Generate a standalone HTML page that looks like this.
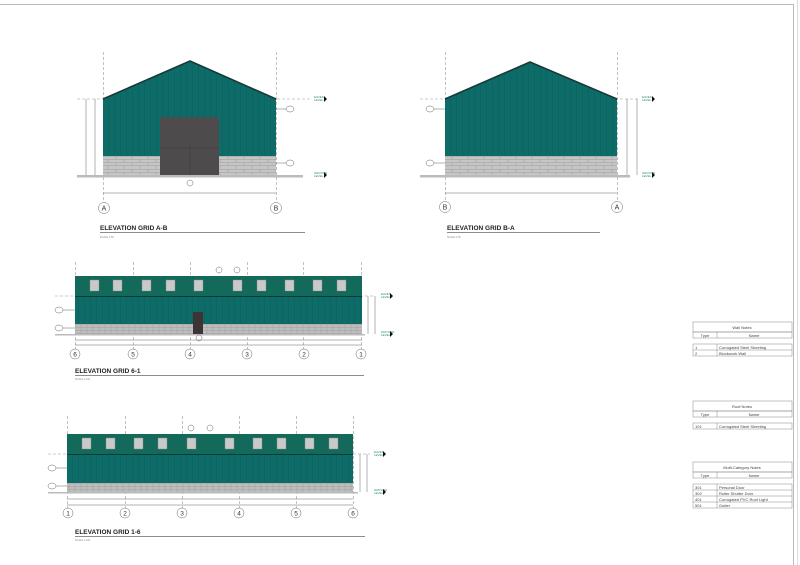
<!DOCTYPE html>
<html><head><meta charset="utf-8"><style>
html,body{margin:0;padding:0;background:#fff;}
svg{display:block;font-family:"Liberation Sans",sans-serif;}
</style></head><body>
<svg width="800" height="565" viewBox="0 0 800 565" xmlns="http://www.w3.org/2000/svg">
<defs>
<pattern id="clad" width="6" height="10" patternUnits="userSpaceOnUse"><rect width="6" height="10" fill="#0d6b68"/><line x1="0.5" y1="0" x2="0.5" y2="10" stroke="#0a5f5c" stroke-width="0.5"/></pattern>
<pattern id="block" width="16" height="6.5" patternUnits="userSpaceOnUse"><rect width="16" height="6.5" fill="#c6c6c6"/><path d="M0 0.3H16M0 3.3H16M4 0V3.3M12 3.3V6.5" stroke="#9a9a9a" stroke-width="0.5" fill="none"/></pattern>
<pattern id="blk2" width="6" height="3" patternUnits="userSpaceOnUse"><rect width="6" height="3" fill="#bdbdbd"/><path d="M0 0.3H6M3 0V3" stroke="#999" stroke-width="0.4"/></pattern>
</defs>
<!-- page border -->
<path d="M0 4.5H793.5V565" stroke="#bbb" fill="none" stroke-width="1"/>
<line x1="797.5" y1="0" x2="797.5" y2="565" stroke="#ddd"/>

<g stroke="#999" stroke-width="0.6" stroke-dasharray="3,2" fill="none">
<!-- A-B -->
<line x1="103.5" y1="52" x2="103.5" y2="202"/><line x1="276.5" y1="52" x2="276.5" y2="202"/>
<line x1="77" y1="99" x2="310" y2="99"/>
<!-- B-A -->
<line x1="445.5" y1="52" x2="445.5" y2="202"/><line x1="617.5" y1="52" x2="617.5" y2="202"/>
<line x1="420" y1="99" x2="640" y2="99"/>
<!-- 6-1 -->
<line x1="75.5" y1="262" x2="75.5" y2="349"/><line x1="133.5" y1="262" x2="133.5" y2="349"/><line x1="190.5" y1="262" x2="190.5" y2="349"/><line x1="247.5" y1="262" x2="247.5" y2="349"/><line x1="303.5" y1="262" x2="303.5" y2="349"/><line x1="361.5" y1="262" x2="361.5" y2="349"/>
<line x1="55" y1="296" x2="375" y2="296"/>
<!-- 1-6 -->
<line x1="67.5" y1="416" x2="67.5" y2="508"/><line x1="125.5" y1="416" x2="125.5" y2="508"/><line x1="182.5" y1="416" x2="182.5" y2="508"/><line x1="239.5" y1="416" x2="239.5" y2="508"/><line x1="296.5" y1="416" x2="296.5" y2="508"/><line x1="353.5" y1="416" x2="353.5" y2="508"/>
<line x1="48" y1="454" x2="370" y2="454"/>
</g>

<!-- ===== Elevation A-B ===== -->
<polygon points="103,99 190,61 276,99 276,156 103,156" fill="url(#clad)"/>
<path d="M103 99L190 61L276 99" stroke="#173a38" stroke-width="1.6" fill="none"/>
<rect x="103" y="156" width="173" height="19" fill="url(#block)"/>
<rect x="160" y="117" width="59" height="58" fill="#4d4b4c"/>
<path d="M160 148H219M190 145V175" stroke="#333" stroke-width="0.4"/>
<rect x="77" y="175" width="226" height="2.5" fill="#bbb"/>
<g stroke="#666" stroke-width="0.5" fill="none">
<line x1="103" y1="193" x2="276" y2="193"/>
<line x1="86" y1="99" x2="86" y2="175"/><line x1="95" y1="99" x2="95" y2="175"/>
<circle cx="104" cy="208" r="5.5"/><circle cx="276" cy="208" r="5.5"/>
<circle cx="190" cy="183" r="3"/><ellipse cx="290" cy="109" rx="4" ry="3"/><ellipse cx="290" cy="163" rx="4" ry="3"/>
<line x1="276" y1="109" x2="286" y2="109"/><line x1="276" y1="163" x2="286" y2="163"/>
</g>
<g font-size="7" text-anchor="middle" fill="#333"><text x="104" y="210.5">A</text><text x="276" y="210.5">B</text></g>
<text x="100" y="230" font-size="6.5" font-weight="bold" fill="#222">ELEVATION GRID A-B</text>
<line x1="100" y1="232.5" x2="305" y2="232.5" stroke="#666" stroke-width="0.7"/>
<text x="100" y="238" font-size="2.5" fill="#888">SCALE 1:50</text>
<g font-size="3" fill="#2a8a6a"><text x="314" y="98">EAVES</text><text x="314" y="101">LEVEL</text><text x="314" y="174">GROUND</text><text x="314" y="177">LEVEL</text></g>
<path d="M324 96l3 3-3 3zM324 172l3 3-3 3z" fill="#111"/>

<!-- ===== Elevation B-A ===== -->
<polygon points="445,99 530,62 617,99 617,156 445,156" fill="url(#clad)"/>
<path d="M445 99L530 62L617 99" stroke="#173a38" stroke-width="1.6" fill="none"/>
<rect x="445" y="156" width="172" height="19" fill="url(#block)"/>
<rect x="420" y="175" width="210" height="2.5" fill="#bbb"/>
<g stroke="#666" stroke-width="0.5" fill="none">
<line x1="445" y1="193" x2="617" y2="193"/>
<line x1="627" y1="99" x2="627" y2="175"/><line x1="637" y1="99" x2="637" y2="175"/>
<circle cx="445" cy="207" r="5.5"/><circle cx="617" cy="207" r="5.5"/>
<ellipse cx="430" cy="109" rx="4" ry="3"/><ellipse cx="430" cy="163" rx="4" ry="3"/>
<line x1="434" y1="109" x2="445" y2="109"/><line x1="434" y1="163" x2="445" y2="163"/>
</g>
<g font-size="7" text-anchor="middle" fill="#333"><text x="445" y="209.5">B</text><text x="617" y="209.5">A</text></g>
<text x="447" y="230" font-size="6.5" font-weight="bold" fill="#222">ELEVATION GRID B-A</text>
<line x1="447" y1="232.5" x2="600" y2="232.5" stroke="#666" stroke-width="0.7"/>
<text x="447" y="238" font-size="2.5" fill="#888">SCALE 1:50</text>
<g font-size="3" fill="#2a8a6a"><text x="642" y="98">EAVES</text><text x="642" y="101">LEVEL</text><text x="642" y="174">GROUND</text><text x="642" y="177">LEVEL</text></g>
<path d="M652 96l3 3-3 3zM652 172l3 3-3 3z" fill="#111"/>

<!-- ===== Elevation 6-1 ===== -->
<rect x="75" y="276" width="287" height="20" fill="#146a5a"/>
<rect x="75" y="296" width="287" height="28" fill="url(#clad)"/>
<line x1="75" y1="296.5" x2="362" y2="296.5" stroke="#0a3d3a" stroke-width="1"/>
<rect x="75" y="324" width="287" height="10" fill="url(#blk2)"/>
<g fill="#c9c9c9" stroke="#888" stroke-width="0.4">
<rect x="90" y="280" width="9" height="11"/><rect x="113" y="280" width="9" height="11"/><rect x="142" y="280" width="9" height="11"/><rect x="166" y="280" width="9" height="11"/><rect x="194" y="280" width="9" height="11"/><rect x="233" y="280" width="9" height="11"/><rect x="257" y="280" width="9" height="11"/><rect x="285" y="280" width="9" height="11"/><rect x="313" y="280" width="9" height="11"/><rect x="337" y="280" width="9" height="11"/></g>
<rect x="193" y="312" width="10" height="22" fill="#3d3535"/>
<rect x="55" y="334" width="310" height="1.5" fill="#bbb"/>
<g stroke="#666" stroke-width="0.5" fill="none">
<line x1="75" y1="340" x2="362" y2="340"/><line x1="75" y1="345" x2="362" y2="345"/>
<line x1="368" y1="296" x2="368" y2="334"/><line x1="375" y1="296" x2="375" y2="334"/>
<circle cx="75" cy="354" r="5"/><circle cx="133" cy="354" r="5"/><circle cx="190" cy="354" r="5"/><circle cx="247" cy="354" r="5"/><circle cx="304" cy="354" r="5"/><circle cx="361" cy="354" r="5"/>
<ellipse cx="59" cy="310" rx="4" ry="3"/><ellipse cx="59" cy="328" rx="4" ry="3"/><circle cx="219" cy="270" r="3"/><circle cx="237" cy="270" r="3"/><circle cx="199" cy="338" r="3"/>
<line x1="63" y1="310" x2="75" y2="310"/><line x1="63" y1="328" x2="75" y2="328"/>
</g>
<g font-size="6.5" text-anchor="middle" fill="#333"><text x="75" y="356.5">6</text><text x="133" y="356.5">5</text><text x="190" y="356.5">4</text><text x="247" y="356.5">3</text><text x="304" y="356.5">2</text><text x="361" y="356.5">1</text></g>
<text x="75" y="373" font-size="6.5" font-weight="bold" fill="#222">ELEVATION GRID 6-1</text>
<line x1="75" y1="375.5" x2="364" y2="375.5" stroke="#666" stroke-width="0.7"/>
<text x="75" y="380" font-size="2.5" fill="#888">SCALE 1:100</text>
<g font-size="3" fill="#2a8a6a"><text x="381" y="295">EAVES</text><text x="381" y="298">LEVEL</text><text x="381" y="333">GROUND</text><text x="381" y="336">LEVEL</text></g>
<path d="M390 293l3 3-3 3zM390 331l3 3-3 3z" fill="#111"/>

<!-- ===== Elevation 1-6 ===== -->
<rect x="67" y="434" width="286" height="20" fill="#146a5a"/>
<rect x="67" y="454" width="286" height="29" fill="url(#clad)"/>
<line x1="67" y1="454.5" x2="353" y2="454.5" stroke="#0a3d3a" stroke-width="1"/>
<rect x="67" y="483" width="286" height="9" fill="url(#blk2)"/>
<g fill="#c9c9c9" stroke="#888" stroke-width="0.4">
<rect x="82" y="438" width="9" height="11"/><rect x="106" y="438" width="9" height="11"/><rect x="134" y="438" width="9" height="11"/><rect x="158" y="438" width="9" height="11"/><rect x="187" y="438" width="9" height="11"/><rect x="225" y="438" width="9" height="11"/><rect x="253" y="438" width="9" height="11"/><rect x="277" y="438" width="9" height="11"/><rect x="305" y="438" width="9" height="11"/><rect x="329" y="438" width="9" height="11"/></g>
<rect x="48" y="492" width="310" height="1.5" fill="#bbb"/>
<g stroke="#666" stroke-width="0.5" fill="none">
<line x1="67" y1="499" x2="353" y2="499"/><line x1="67" y1="505" x2="353" y2="505"/>
<line x1="360" y1="454" x2="360" y2="492"/><line x1="367" y1="454" x2="367" y2="492"/>
<circle cx="68" cy="513" r="5"/><circle cx="125" cy="513" r="5"/><circle cx="182" cy="513" r="5"/><circle cx="239" cy="513" r="5"/><circle cx="296" cy="513" r="5"/><circle cx="353" cy="513" r="5"/>
<ellipse cx="52" cy="468" rx="4" ry="3"/><ellipse cx="52" cy="486" rx="4" ry="3"/><circle cx="191" cy="428" r="3"/><circle cx="210" cy="428" r="3"/>
<line x1="56" y1="468" x2="67" y2="468"/><line x1="56" y1="486" x2="67" y2="486"/>
</g>
<g font-size="6.5" text-anchor="middle" fill="#333"><text x="68" y="515.5">1</text><text x="125" y="515.5">2</text><text x="182" y="515.5">3</text><text x="239" y="515.5">4</text><text x="296" y="515.5">5</text><text x="353" y="515.5">6</text></g>
<text x="75" y="534" font-size="6.5" font-weight="bold" fill="#222">ELEVATION GRID 1-6</text>
<line x1="75" y1="536.5" x2="365" y2="536.5" stroke="#666" stroke-width="0.7"/>
<text x="75" y="541" font-size="2.5" fill="#888">SCALE 1:100</text>
<g font-size="3" fill="#2a8a6a"><text x="374" y="453">EAVES</text><text x="374" y="456">LEVEL</text><text x="374" y="491">GROUND</text><text x="374" y="494">LEVEL</text></g>
<path d="M383 451l3 3-3 3zM383 489l3 3-3 3z" fill="#111"/>

<!-- ===== Tables ===== -->
<g stroke="#888" stroke-width="0.5" fill="none">
<rect x="693" y="322" width="99" height="10"/><rect x="693" y="332" width="99" height="6"/><line x1="717" y1="332" x2="717" y2="338"/>
<rect x="693" y="344" width="99" height="12"/><line x1="693" y1="350" x2="792" y2="350"/><line x1="717" y1="344" x2="717" y2="356"/>
<rect x="693" y="401" width="99" height="10"/><rect x="693" y="411" width="99" height="6"/><line x1="717" y1="411" x2="717" y2="417"/>
<rect x="693" y="423" width="99" height="6"/><line x1="717" y1="423" x2="717" y2="429"/>
<rect x="693" y="462" width="99" height="10"/><rect x="693" y="472" width="99" height="6"/><line x1="717" y1="472" x2="717" y2="478"/>
<rect x="693" y="484" width="99" height="24"/><line x1="693" y1="490" x2="792" y2="490"/><line x1="693" y1="496" x2="792" y2="496"/><line x1="693" y1="502" x2="792" y2="502"/><line x1="717" y1="484" x2="717" y2="508"/>
</g>
<g font-size="4" fill="#444">
<text x="742" y="329" text-anchor="middle">Wall Notes</text><text x="705" y="337" text-anchor="middle">Type</text><text x="754" y="337" text-anchor="middle">Name</text>
<text x="695" y="349">1</text><text x="719" y="349">Corrugated Steel Sheeting</text>
<text x="695" y="355">2</text><text x="719" y="355">Blockwork Wall</text>
<text x="742" y="408" text-anchor="middle">Roof Notes</text><text x="705" y="416" text-anchor="middle">Type</text><text x="754" y="416" text-anchor="middle">Name</text>
<text x="695" y="428">101</text><text x="719" y="428">Corrugated Steel Sheeting</text>
<text x="742" y="469" text-anchor="middle">Multi-Category Notes</text><text x="705" y="477" text-anchor="middle">Type</text><text x="754" y="477" text-anchor="middle">Name</text>
<text x="695" y="489">301</text><text x="719" y="489">Personal Door</text>
<text x="695" y="495">302</text><text x="719" y="495">Roller Shutter Door</text>
<text x="695" y="501">401</text><text x="719" y="501">Corrugated PVC Roof Light</text>
<text x="695" y="507">501</text><text x="719" y="507">Gutter</text>
</g>
</svg>
</body></html>
